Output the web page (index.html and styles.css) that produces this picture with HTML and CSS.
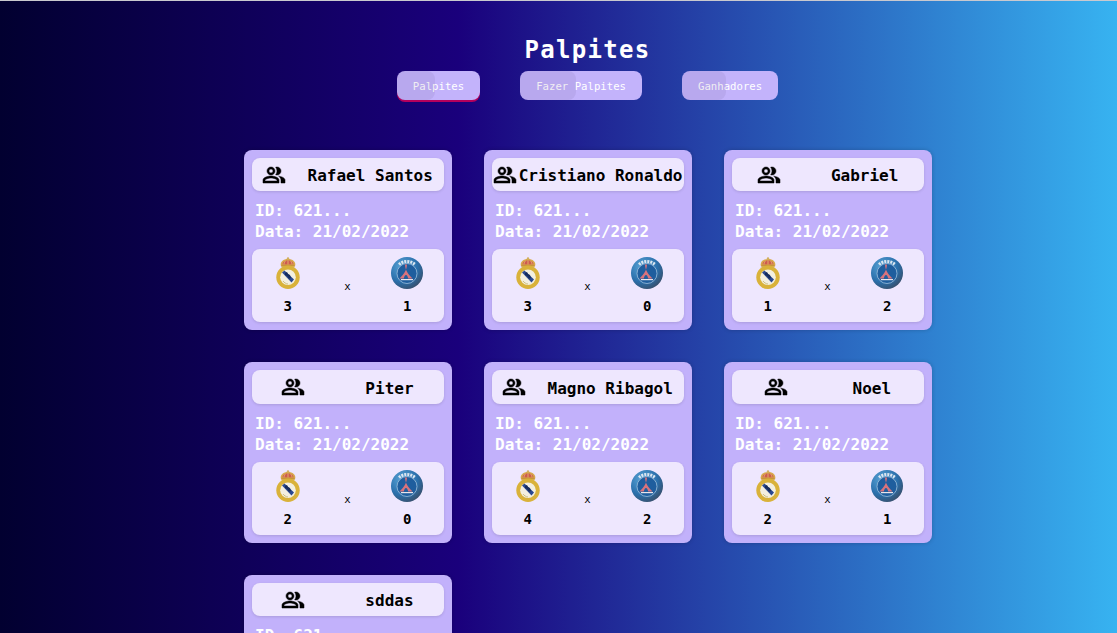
FILE: index.html
```html
<!doctype html>
<html lang="pt-BR">

<head>
  <meta charset="UTF-8" />
  <meta name="viewport" content="width=device-width, initial-scale=1.0" />
  <title>Palpites</title>
  <link rel="stylesheet" href="styles.css">
</head>

<body>
  <!-- shared icons and crests -->
  <svg class="defs" width="0" height="0" aria-hidden="true">
    <symbol id="people" viewBox="0 0 24 24">
      <path d="M16.67 13.13C18.04 14.06 19 15.32 19 17v3h4v-3c0-2.18-3.57-3.47-6.33-3.87z" />
      <path d="M15 12c2.21 0 4-1.79 4-4s-1.79-4-4-4c-.47 0-.91.1-1.33.24C14.5 5.27 15 6.58 15 8s-.5 2.73-1.33 3.76c.42.14.86.24 1.33.24z" />
      <path d="M9 12c2.21 0 4-1.79 4-4s-1.79-4-4-4-4 1.79-4 4 1.79 4 4 4zm0-6c1.1 0 2 .9 2 2s-.9 2-2 2-2-.9-2-2 .9-2 2-2z" />
      <path d="M9 13c-2.67 0-8 1.34-8 4v3h16v-3c0-2.66-5.33-4-8-4zm6 5H3v-.99C3.2 16.29 6.3 15 9 15s5.8 1.29 6 2z" />
    </symbol>
    <symbol id="real" viewBox="0 0 32 32">
      <path d="M9 9.500C7.500 4.500 11.500 2 16 2s8.500 2.500 7 7.500z" fill="#d8a94c" />
      <path d="M10.500 7.500C10.500 4.800 13 3.500 16 3.500s5.500 1.300 5.500 4z" fill="#cf5a50" />
      <path d="M12 7.500c0-2 1-3 1.500-3.500M20 7.500c0-2-1-3-1.500-3.500M16 7.500V3.500" stroke="#e3c170" stroke-width="0.800" fill="none" />
      <circle cx="16" cy="1.500" r="1.200" fill="#d0b060" />
      <rect x="9.500" y="7.800" width="13" height="1.800" fill="#c8953a" />
      <circle cx="16" cy="20.300" r="11.700" fill="#d9b23a" />
      <circle cx="16" cy="20.300" r="7.800" fill="#f3efdf" />
      <path d="M10 15.500l2.500-2 9.500 9-2.500 3z" fill="#29488f" />
      <path d="M13 16l2-1 1 2 2 1 1 3-2 .8-2-2.800-2-1z" fill="#162c5c" />
      <path d="M11 24c1 1.500 3 2.800 5 3" stroke="#cdbf80" stroke-width="1" fill="none" />
    </symbol>
    <symbol id="psg" viewBox="0 0 32 32">
      <defs>
        <radialGradient id="psg-ball" cx="35%" cy="30%" r="80%">
          <stop offset="0" stop-color="#5aa5d8" />
          <stop offset="0.6" stop-color="#2a6fab" />
          <stop offset="1" stop-color="#3a4a62" />
        </radialGradient>
      </defs>
      <circle cx="16" cy="16" r="16" fill="url(#psg-ball)" />
      <circle cx="16" cy="16.500" r="10" fill="#1f5e9e" stroke="#9dbedb" stroke-width="0.800" />
      <path d="M8 7.500A12 12 0 0 1 24 7.500" fill="none" stroke="#dbe6f0" stroke-width="3" stroke-dasharray="2 1" />
      <path d="M16 7.500c-.3 5-2 8.500-7.500 14h4.300c.6-2.300 1-3.500 2.200-3.500s1.600 1.200 2.200 3.500h4.300c-5.500-5.500-7.200-9-7.500-14z" fill="#d9737c" />
      <rect x="10" y="22" width="12" height="1.200" fill="#e9e4ea" />
    </symbol>
  </svg>

  <main class="page">
    <h1 class="page-title">Palpites</h1>

    <nav class="tabs">
      <button class="tab tab-active">Palpites</button>
      <button class="tab">Fazer Palpites</button>
      <button class="tab">Ganhadores</button>
    </nav>

    <section class="cards">
      <article class="card">
        <div class="card-head">
          <svg class="icon"><use href="#people" /></svg>
          <span>Rafael Santos</span>
        </div>
        <div class="card-info">
          <p>ID: 621...</p>
          <p>Data: 21/02/2022</p>
        </div>
        <div class="match">
          <div class="team"><svg class="crest"><use href="#real" /></svg><span>3</span></div>
          <span class="versus">x</span>
          <div class="team"><svg class="crest"><use href="#psg" /></svg><span>1</span></div>
        </div>
      </article>

      <article class="card">
        <div class="card-head">
          <svg class="icon"><use href="#people" /></svg>
          <span>Cristiano Ronaldo</span>
        </div>
        <div class="card-info">
          <p>ID: 621...</p>
          <p>Data: 21/02/2022</p>
        </div>
        <div class="match">
          <div class="team"><svg class="crest"><use href="#real" /></svg><span>3</span></div>
          <span class="versus">x</span>
          <div class="team"><svg class="crest"><use href="#psg" /></svg><span>0</span></div>
        </div>
      </article>

      <article class="card">
        <div class="card-head">
          <svg class="icon"><use href="#people" /></svg>
          <span>Gabriel</span>
        </div>
        <div class="card-info">
          <p>ID: 621...</p>
          <p>Data: 21/02/2022</p>
        </div>
        <div class="match">
          <div class="team"><svg class="crest"><use href="#real" /></svg><span>1</span></div>
          <span class="versus">x</span>
          <div class="team"><svg class="crest"><use href="#psg" /></svg><span>2</span></div>
        </div>
      </article>

      <article class="card">
        <div class="card-head">
          <svg class="icon"><use href="#people" /></svg>
          <span>Piter</span>
        </div>
        <div class="card-info">
          <p>ID: 621...</p>
          <p>Data: 21/02/2022</p>
        </div>
        <div class="match">
          <div class="team"><svg class="crest"><use href="#real" /></svg><span>2</span></div>
          <span class="versus">x</span>
          <div class="team"><svg class="crest"><use href="#psg" /></svg><span>0</span></div>
        </div>
      </article>

      <article class="card">
        <div class="card-head">
          <svg class="icon"><use href="#people" /></svg>
          <span>Magno Ribagol</span>
        </div>
        <div class="card-info">
          <p>ID: 621...</p>
          <p>Data: 21/02/2022</p>
        </div>
        <div class="match">
          <div class="team"><svg class="crest"><use href="#real" /></svg><span>4</span></div>
          <span class="versus">x</span>
          <div class="team"><svg class="crest"><use href="#psg" /></svg><span>2</span></div>
        </div>
      </article>

      <article class="card">
        <div class="card-head">
          <svg class="icon"><use href="#people" /></svg>
          <span>Noel</span>
        </div>
        <div class="card-info">
          <p>ID: 621...</p>
          <p>Data: 21/02/2022</p>
        </div>
        <div class="match">
          <div class="team"><svg class="crest"><use href="#real" /></svg><span>2</span></div>
          <span class="versus">x</span>
          <div class="team"><svg class="crest"><use href="#psg" /></svg><span>1</span></div>
        </div>
      </article>

      <article class="card">
        <div class="card-head">
          <svg class="icon"><use href="#people" /></svg>
          <span>sddas</span>
        </div>
        <div class="card-info">
          <p>ID: 621...</p>
          <p>Data: 21/02/2022</p>
        </div>
        <div class="match">
          <div class="team"><svg class="crest"><use href="#real" /></svg><span>2</span></div>
          <span class="versus">x</span>
          <div class="team"><svg class="crest"><use href="#psg" /></svg><span>2</span></div>
        </div>
      </article>
    </section>
  </main>
</body>

</html>
```

FILE: styles.css
```css
html,
body {
  height: 100%;
  margin: 0;
  overflow: hidden;
}

body {
  box-sizing: border-box;
  border-top: 1px solid #c9c9cf;
  background: linear-gradient(90deg, #020030 0%, #1a007c 41%, #37b3f1 100%);
  font-family: "DejaVu Sans Mono", monospace;
}

.defs {
  position: absolute;
}

.page {
  margin-left: 58px;
  padding-top: 35px;
}

.page-title {
  margin: 0;
  color: #ffffff;
  font-size: 24px;
  font-weight: 700;
  letter-spacing: 1.3px;
  line-height: 28px;
  text-align: center;
}

/* Tabs */
.tabs {
  display: flex;
  justify-content: center;
  gap: 40px;
  margin-top: 7px;
}

.tab {
  position: relative;
  height: 29px;
  padding: 2px 16px 0;
  border: none;
  border-radius: 8px;
  background-color: #c3b3fb;
  color: #ffffff;
  font-family: inherit;
  font-size: 10.67px;
}

/* darker patch on the left of each tab */
.tab::before {
  content: "";
  position: absolute;
  top: 0;
  left: 0;
  bottom: 0;
  width: 46%;
  border-radius: 8px;
  background-color: rgba(60, 40, 90, 0.08);
}

.tab-active {
  box-shadow: 0 2px 0 #b5005c;
}

/* Cards */
.cards {
  display: grid;
  grid-template-columns: repeat(3, 208px);
  gap: 32px;
  justify-content: center;
  margin-top: 49.8px;
}

.card {
  padding: 8px;
  border-radius: 8px;
  background-color: #c2b1fb;
  box-shadow: 0 0 4px rgba(0, 0, 0, 0.2);
}

.card-head {
  display: flex;
  justify-content: space-around;
  align-items: center;
  height: 33.5px;
  border-radius: 8px;
  background-color: #eee7fe;
  box-shadow: 0 1px 3px rgba(0, 0, 0, 0.12);
  color: #000000;
  font-size: 16px;
  font-weight: 700;
  white-space: nowrap;
}

.card-head span {
  padding-top: 2px;
}

.icon {
  flex: none;
  width: 24px;
  height: 24px;
  fill: #000000;
  stroke: #000000;
  stroke-width: 0.5px;
}

.card-info {
  margin: 9px 0 7px;
  padding-left: 3.5px;
  color: #ffffff;
  font-size: 16px;
  font-weight: 700;
  line-height: 21px;
}

.card-info p {
  margin: 0;
  white-space: nowrap;
}

.match {
  display: flex;
  justify-content: space-around;
  align-items: center;
  padding: 8px 0;
  border-radius: 8px;
  background-color: #eee7fe;
  box-shadow: 0 1px 3px rgba(0, 0, 0, 0.12);
  color: #000000;
}

.team {
  display: flex;
  flex-direction: column;
  align-items: center;
  gap: 9px;
  font-size: 14px;
  font-weight: 700;
  line-height: 16px;
}

.crest {
  width: 32px;
  height: 32px;
}

.versus {
  padding-top: 2px;
  font-size: 10.67px;
}
```
